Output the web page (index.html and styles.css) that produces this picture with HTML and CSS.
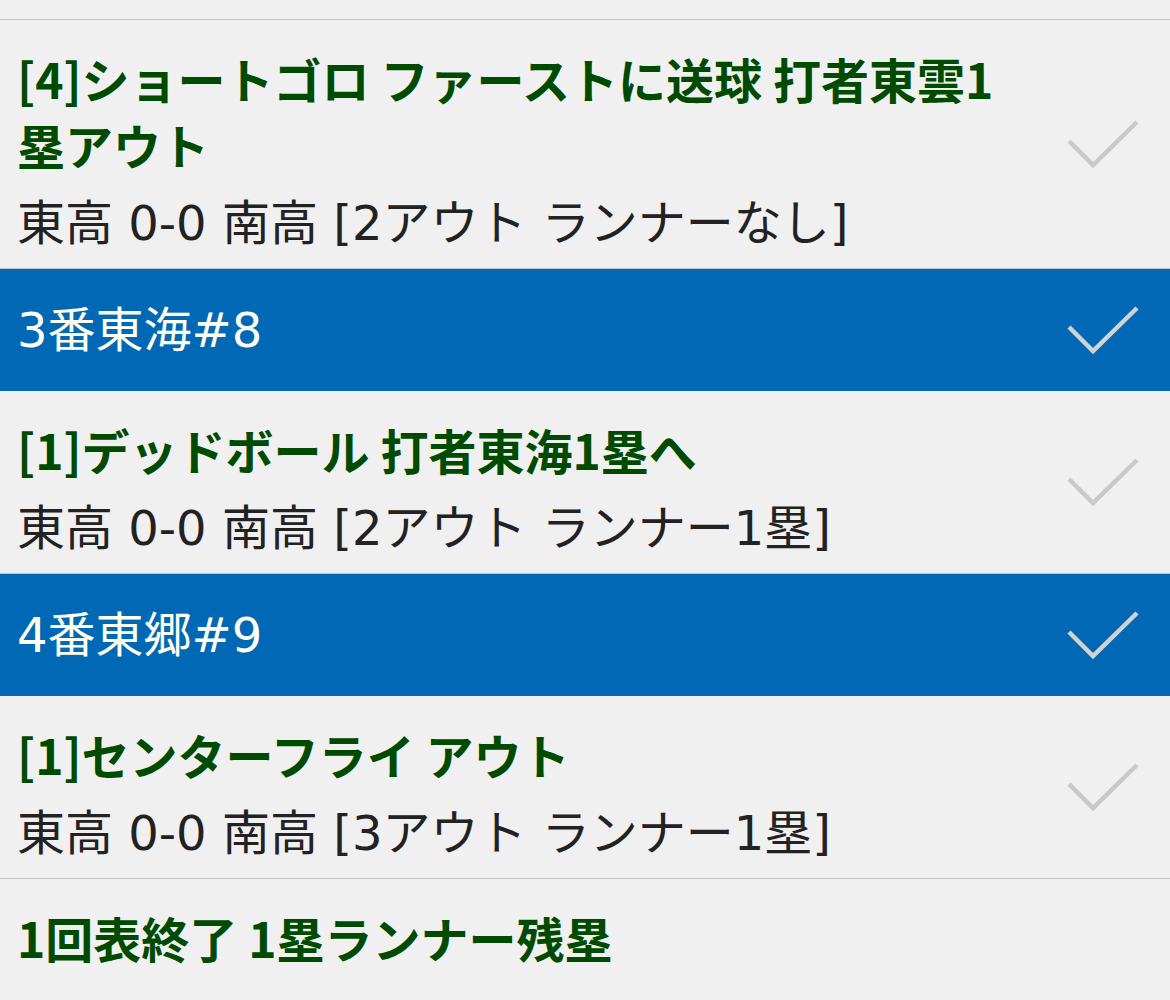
FILE: index.html
```html
<!DOCTYPE html>
<html lang="ja">
<head>
<meta charset="utf-8">
<title>速報</title>
<link rel="stylesheet" href="styles.css">
</head>
<body>
<div class="list">
  <div class="row row--head"></div>

  <div class="row play">
    <div class="play__text">
      <div class="play__title">[4]ショートゴロ ファーストに送球 打者東雲1塁アウト</div>
      <div class="play__score">東高 0-0 南高 [2アウト ランナーなし]</div>
    </div>
    <svg class="check" viewBox="0 0 72 50" aria-hidden="true"><path d="M2 22 L26 46 L70 3"/></svg>
  </div>

  <div class="row batter">
    <div class="batter__name">3番東海#8</div>
    <svg class="check check--light" viewBox="0 0 72 50" aria-hidden="true"><path d="M2 22 L26 46 L70 3"/></svg>
  </div>

  <div class="row play">
    <div class="play__text">
      <div class="play__title">[1]デッドボール 打者東海1塁へ</div>
      <div class="play__score">東高 0-0 南高 [2アウト ランナー1塁]</div>
    </div>
    <svg class="check" viewBox="0 0 72 50" aria-hidden="true"><path d="M2 22 L26 46 L70 3"/></svg>
  </div>

  <div class="row batter">
    <div class="batter__name">4番東郷#9</div>
    <svg class="check check--light" viewBox="0 0 72 50" aria-hidden="true"><path d="M2 22 L26 46 L70 3"/></svg>
  </div>

  <div class="row play">
    <div class="play__text">
      <div class="play__title">[1]センターフライ アウト</div>
      <div class="play__score">東高 0-0 南高 [3アウト ランナー1塁]</div>
    </div>
    <svg class="check" viewBox="0 0 72 50" aria-hidden="true"><path d="M2 22 L26 46 L70 3"/></svg>
  </div>

  <div class="row summary">1回表終了 1塁ランナー残塁</div>
</div>
</body>
</html>
```

FILE: styles.css
```css
html, body {
  margin: 0;
  padding: 0;
  background: #f0f0f0;
}

body {
  font-family: "Noto Sans CJK JP", "Noto Sans", sans-serif;
  font-size: 48px;
  color: #222222;
  width: 1170px;
  height: 1000px;
  overflow: hidden;
}

.list {
  display: flex;
  flex-direction: column;
}

.row {
  display: flex;
  align-items: center;
  box-sizing: border-box;
}

.row--head {
  height: 20px;
  border-bottom: 1px solid #c4c4c4;
}

.play {
  padding: 0 31px 0 17px;
  border-bottom: 1px solid #c4c4c4;
}

.play__text {
  flex: 1;
  min-width: 0;
  padding: 25px 40px 13px 0;
}

.play__title {
  font-weight: 700;
  color: #004b00;
  line-height: 66px;
}

.play__score {
  margin-top: 14px;
  line-height: 64px;
  font-family: "DejaVu Sans", "Noto Sans CJK JP", sans-serif;
  color: #222222;
}

.batter {
  height: 122px;
  padding: 0 31px 0 17px;
  background: #0068b5;
}

.batter__name {
  flex: 1;
  font-family: "DejaVu Sans", "Noto Sans CJK JP", sans-serif;
  color: #fffff2;
  line-height: 64px;
}

.summary {
  padding: 26px 17px 40px;
  line-height: 64px;
  font-weight: 700;
  color: #004b00;
}

.check {
  flex: none;
  width: 72px;
  height: 50px;
  margin-left: auto;
  fill: none;
  stroke: #c9c9c9;
  stroke-width: 4.5;
  stroke-linecap: butt;
}

.check--light {
  stroke: #d2d2d2;
}
```
